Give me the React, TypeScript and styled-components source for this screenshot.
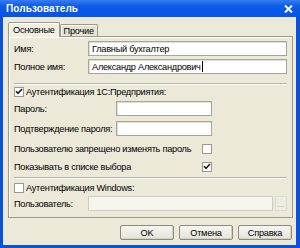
import React, { FC } from 'react';
import styled, { createGlobalStyle } from 'styled-components';

const GlobalStyle = createGlobalStyle`
  html, body {
    margin: 0;
    padding: 0;
    background: #ffffff;
  }
  * {
    box-sizing: border-box;
  }
`;

const Window = styled.div`
  width: 300px;
  height: 248px;
  display: flex;
  flex-direction: column;
  background: #0a52dc;
  padding: 0 4px 3px 3px;
  font-family: "Liberation Sans", Arial, sans-serif;
  font-size: 9.2px;
  letter-spacing: -0.25px;
  color: #000;
`;

const TitleBar = styled.div`
  height: 17px;
  margin: 0 -4px 0 -3px;
  padding: 0 7px 0 6px;
  display: flex;
  align-items: center;
  justify-content: space-between;
  background: linear-gradient(#3a7cf0, #0c5ce8 35%, #0654e2);
`;

const Title = styled.span`
  color: #fff;
  font-weight: bold;
  font-size: 10px;
  letter-spacing: 0.1px;
`;

const Body = styled.div`
  flex: 1;
  display: flex;
  flex-direction: column;
  background: #ece9d8;
  padding: 5px 3px 5px 5px;
`;

const TabRow = styled.div`
  display: flex;
  align-items: flex-end;
  height: 14px;
`;

const Tab = styled.div<{ $active?: boolean }>`
  height: ${(p) => (p.$active ? 15 : 12)}px;
  padding: 0 ${(p) => (p.$active ? 4 : 3)}px;
  display: flex;
  align-items: center;
  border: 1px solid #9c9a8c;
  border-bottom: none;
  border-radius: 2px 2px 0 0;
  background: ${(p) => (p.$active ? '#f1efe4' : '#e6e3d2')};
  box-shadow: inset 1px 1px 0 #fff;
  margin-bottom: ${(p) => (p.$active ? -1 : 0)}px;
  position: relative;
  z-index: ${(p) => (p.$active ? 1 : 0)};
`;

const Panel = styled.div`
  height: 182px;
  border: 1px solid #9c9a8c;
  box-shadow: inset 1px 1px 0 #fff;
  background: #ece9d8;
  padding: 0 5px;
  display: flex;
  flex-direction: column;
`;

const Row = styled.div<{ $top: number; $h?: number }>`
  margin-top: ${(p) => p.$top}px;
  height: ${(p) => p.$h ?? 15}px;
  display: flex;
  align-items: center;
`;

const Label = styled.span<{ $w?: number }>`
  width: ${(p) => (p.$w ? `${p.$w}px` : 'auto')};
  flex-shrink: 0;
  white-space: nowrap;
`;

const Input = styled.div<{ $w?: number; $disabled?: boolean }>`
  height: 100%;
  width: ${(p) => (p.$w ? `${p.$w}px` : 'auto')};
  flex: ${(p) => (p.$w ? '0 0 auto' : 1)};
  background: ${(p) => (p.$disabled ? '#f6f5ee' : '#fff')};
  border: 1px solid ${(p) => (p.$disabled ? '#cfcdc0' : '#a8a69a')};
  box-shadow: ${(p) => (p.$disabled ? 'none' : 'inset 1px 1px 0 #e2e0d6')};
  padding: 0 3px;
  display: flex;
  align-items: center;
  white-space: nowrap;
  overflow: hidden;
`;

const Caret = styled.span`
  display: inline-block;
  width: 1px;
  height: 11px;
  background: #000;
  margin-left: 1px;
`;

const Separator = styled.div<{ $top: number }>`
  margin-top: ${(p) => p.$top}px;
  height: 2px;
  border-top: 1px solid #b5b3a6;
  border-bottom: 1px solid #fff;
`;

const Box = styled.span`
  width: 10px;
  height: 10px;
  flex-shrink: 0;
  background: #fff;
  border: 1px solid #9c9a8c;
  display: flex;
  align-items: center;
  justify-content: center;
`;

const CheckLabel = styled.span`
  margin-left: 2px;
  white-space: nowrap;
`;

const DotsButton = styled.div`
  width: 12px;
  height: 100%;
  margin-left: 2px;
  display: flex;
  align-items: center;
  justify-content: center;
  color: #b9b7aa;
  font-size: 9px;
  background: #efede3;
  border: 1px solid #dedbcc;
`;

const Footer = styled.div`
  margin-top: 7px;
  height: 15px;
  display: flex;
  justify-content: flex-end;
  gap: 5px;
  padding-right: 1px;
`;

const Button = styled.div`
  width: 54px;
  height: 15px;
  display: flex;
  align-items: center;
  justify-content: center;
  border: 1px solid #8e8c80;
  border-radius: 2px;
  background: linear-gradient(#f7f6f1, #e6e4d9);
  box-shadow: inset -1px -1px 0 #d3d1c4;
`;

const Check: FC = () => (
  <svg width="8" height="7" viewBox="0 0 8 7">
    <path d="M1 3.2 L3 5.3 L7 1" fill="none" stroke="#1a1a1a" strokeWidth="1.6" />
  </svg>
);

const CheckBox: FC<{ checked?: boolean }> = ({ checked }) => (
  <Box>{checked && <Check />}</Box>
);

const CloseIcon: FC = () => (
  <svg width="9" height="8" viewBox="0 0 9 8">
    <path d="M1 0.5 L8 7.5 M8 0.5 L1 7.5" stroke="#fff" strokeWidth="2" />
  </svg>
);

export default function App() {
  return (
    <>
      <GlobalStyle />
      <Window>
        <TitleBar>
          <Title>Пользователь</Title>
          <CloseIcon />
        </TitleBar>
        <Body>
          <TabRow>
            <Tab $active>Основные</Tab>
            <Tab>Прочие</Tab>
          </TabRow>
          <Panel>
            <Row $top={4}>
              <Label $w={74}>Имя:</Label>
              <Input>Главный бухгалтер</Input>
            </Row>
            <Row $top={3}>
              <Label $w={74}>Полное имя:</Label>
              <Input>
                Александр Александрович
                <Caret />
              </Input>
            </Row>
            <Separator $top={9} />
            <Row $top={1} $h={11}>
              <CheckBox checked />
              <CheckLabel>Аутентификация 1С:Предприятия:</CheckLabel>
            </Row>
            <Row $top={4}>
              <Label $w={102}>Пароль:</Label>
              <Input $w={96} />
            </Row>
            <Row $top={5}>
              <Label $w={102}>Подтверждение пароля:</Label>
              <Input $w={96} />
            </Row>
            <Row $top={6} $h={13}>
              <Label $w={188}>Пользователю запрещено изменять пароль</Label>
              <CheckBox />
            </Row>
            <Row $top={5} $h={13}>
              <Label $w={188}>Показывать в списке выбора</Label>
              <CheckBox checked />
            </Row>
            <Separator $top={4} />
            <Row $top={3} $h={11}>
              <CheckBox />
              <CheckLabel>Аутентификация Windows:</CheckLabel>
            </Row>
            <Row $top={3}>
              <Label $w={74}>Пользователь:</Label>
              <Input $disabled />
              <DotsButton>...</DotsButton>
            </Row>
          </Panel>
          <Footer>
            <Button>OK</Button>
            <Button>Отмена</Button>
            <Button>Справка</Button>
          </Footer>
        </Body>
      </Window>
    </>
  );
}
